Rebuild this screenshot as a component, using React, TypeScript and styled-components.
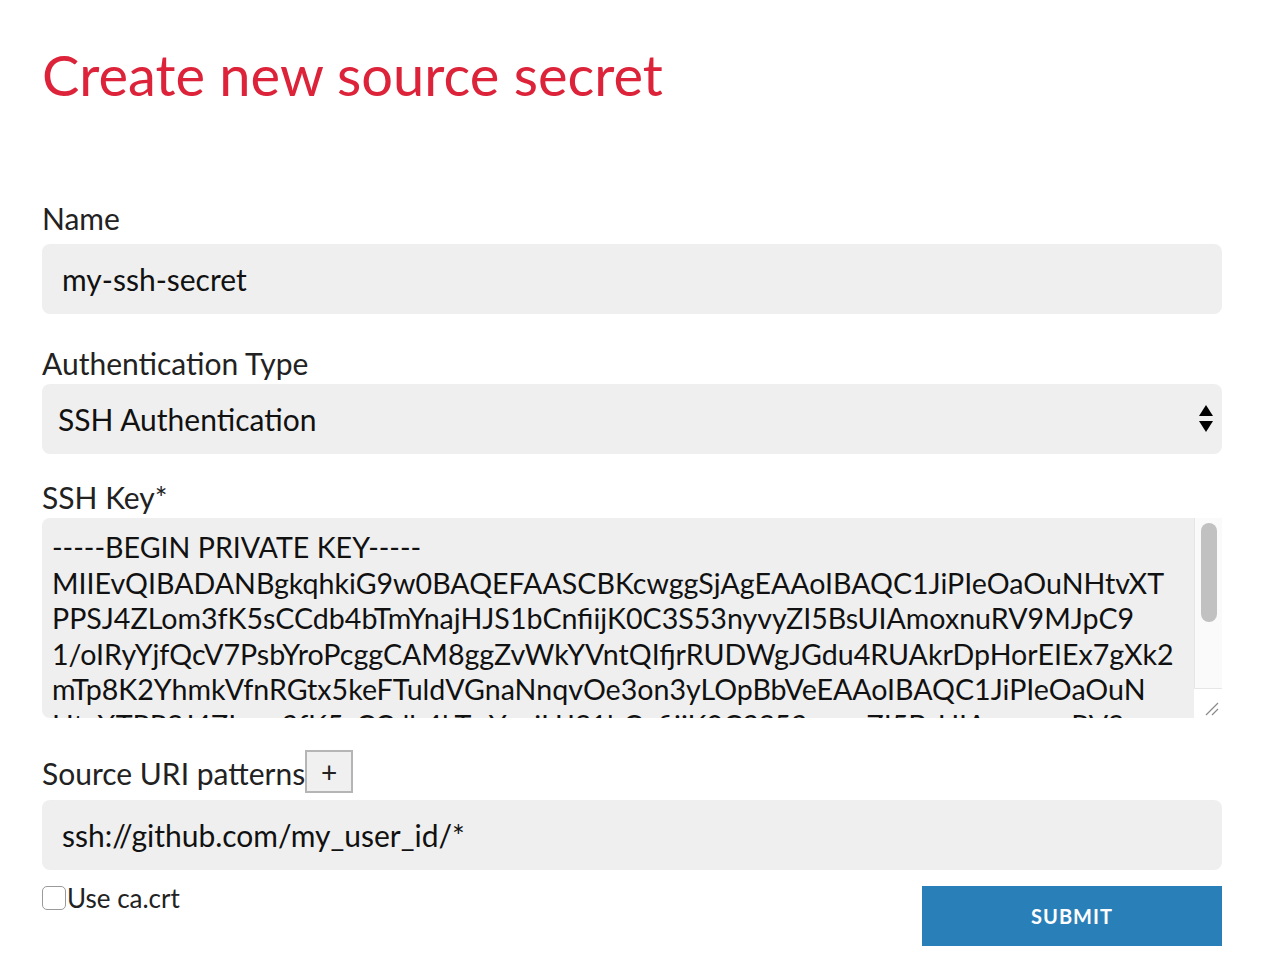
import { useState } from "react";
import styled, { createGlobalStyle } from "styled-components";

const GlobalStyle = createGlobalStyle`
  html, body {
    margin: 0;
    padding: 0;
    background: #ffffff;
  }
  body {
    font-family: Lato, "Noto Sans", sans-serif;
    color: #222222;
  }
`;

const SSH_KEY = [
  "-----BEGIN PRIVATE KEY-----",
  "MIIEvQIBADANBgkqhkiG9w0BAQEFAASCBKcwggSjAgEAAoIBAQC1JiPIeOaOuNHtvXT",
  "PPSJ4ZLom3fK5sCCdb4bTmYnajHJS1bCnfiijK0C3S53nyvyZI5BsUIAmoxnuRV9MJpC9",
  "1/oIRyYjfQcV7PsbYroPcggCAM8ggZvWkYVntQIfjrRUDWgJGdu4RUAkrDpHorEIEx7gXk2",
  "mTp8K2YhmkVfnRGtx5keFTuldVGnaNnqvOe3on3yLOpBbVeEAAoIBAQC1JiPIeOaOuN",
  "HtvXTPPSJ4ZLom3fK5sCCdb4bTmYnajHJS1bCnfiijK0C3S53nyvyZI5BsUIAmoxnuRV9",
  "MJpC91/oIRyYjfQcV7PsbYroPcggCAM8ggZvWkYVntQIfjrRUDWgJGdu4RUAkrDpHorE",
  "-----END PRIVATE KEY-----",
].join("\n");

const App = () => {
  const [name, setName] = useState("my-ssh-secret");
  const [authType, setAuthType] = useState("ssh");
  const [sshKey, setSshKey] = useState(SSH_KEY);
  const [uri, setUri] = useState("ssh://github.com/my_user_id/*");
  const [useCa, setUseCa] = useState(false);

  return (
    <>
      <GlobalStyle />
      <Page>
        <Title>Create new source secret</Title>

        <Form onSubmit={(e) => e.preventDefault()}>
          <Label $top={91} $bottom={9}>
            Name
          </Label>
          <TextInput value={name} onChange={(e) => setName(e.target.value)} />

          <Label $top={32} $bottom={4}>
            Authentication Type
          </Label>
          <SelectWrapper>
            <Select value={authType} onChange={(e) => setAuthType(e.target.value)}>
              <option value="basic">Basic Authentication</option>
              <option value="ssh">SSH Authentication</option>
            </Select>
            <SelectArrows width="14" height="28" viewBox="0 0 14 28">
              <path d="M7 0 L14 11 L0 11 Z" fill="#000" />
              <path d="M0 16 L14 16 L7 27 Z" fill="#000" />
            </SelectArrows>
          </SelectWrapper>

          <Label $top={26} $bottom={4}>
            SSH Key*
          </Label>
          <KeyWrapper>
            <KeyArea value={sshKey} onChange={(e) => setSshKey(e.target.value)} spellCheck={false} />
            <ScrollTrack>
              <ScrollThumb />
            </ScrollTrack>
            <ResizeCorner>
              <svg width="14" height="14" viewBox="0 0 14 14">
                <path d="M1 13 L13 1 M7 13 L13 7" stroke="#8a8a8a" strokeWidth="1.2" fill="none" />
              </svg>
            </ResizeCorner>
          </KeyWrapper>

          <PatternHeader>
            <PatternLabel>Source URI patterns</PatternLabel>
            <AddButton type="button">+</AddButton>
          </PatternHeader>
          <TextInput $top={7} value={uri} onChange={(e) => setUri(e.target.value)} />

          <Footer>
            <CheckLabel>
              <Checkbox type="checkbox" checked={useCa} onChange={(e) => setUseCa(e.target.checked)} />
              Use ca.crt
            </CheckLabel>
            <SubmitButton type="submit">SUBMIT</SubmitButton>
          </Footer>
        </Form>
      </Page>
    </>
  );
};
export default App;

const Page = styled.div`
  padding: 0 44px 28px 42px;
`;

const Title = styled.h1`
  margin: 0;
  padding-top: 40px;
  font-size: 56px;
  line-height: 70px;
  font-weight: 400;
  color: #dc2339;
`;

const Form = styled.form`
  display: flex;
  flex-direction: column;
`;

const Label = styled.label<{ $top?: number; $bottom?: number }>`
  display: block;
  margin-top: ${(p) => p.$top ?? 0}px;
  margin-bottom: ${(p) => p.$bottom ?? 0}px;
  font-size: 30px;
  line-height: 34px;
  color: #222;
`;

const fieldBase = `
  box-sizing: border-box;
  width: 100%;
  border: none;
  outline: none;
  background: #efefef;
  border-radius: 8px;
  font-family: Lato, "Noto Sans", sans-serif;
  font-size: 30px;
  color: #111;
`;

const TextInput = styled.input<{ $top?: number }>`
  ${fieldBase}
  height: 70px;
  margin-top: ${(p) => p.$top ?? 0}px;
  padding: 0 20px;
`;

const SelectWrapper = styled.div`
  position: relative;
`;

const Select = styled.select`
  ${fieldBase}
  appearance: none;
  height: 70px;
  padding: 0 16px;
`;

const SelectArrows = styled.svg`
  position: absolute;
  right: 9px;
  top: 21px;
  pointer-events: none;
`;

const KeyWrapper = styled.div`
  position: relative;
  height: 200px;
`;

const KeyArea = styled.textarea`
  ${fieldBase}
  display: block;
  height: 200px;
  padding: 12px 29px 0 10px;
  font-size: 28.6px;
  line-height: 35.5px;
  border-radius: 8px 0 0 8px;
  resize: none;
  overflow-y: scroll;
  scrollbar-width: none;

  &::-webkit-scrollbar {
    display: none;
  }
`;

const ScrollTrack = styled.div`
  position: absolute;
  top: 0;
  right: 0;
  width: 28px;
  height: 171px;
  box-sizing: border-box;
  background: #fafafa;
  border-left: 1px solid #e6e6e6;
  border-bottom: 1px solid #e6e6e6;
`;

const ScrollThumb = styled.div`
  margin: 5px 0 0 6px;
  width: 16px;
  height: 99px;
  border-radius: 8px;
  background: #c1c1c1;
`;

const ResizeCorner = styled.div`
  position: absolute;
  right: 0;
  bottom: 0;
  width: 28px;
  height: 29px;
  background: #ffffff;
  display: flex;
  align-items: flex-end;
  justify-content: flex-end;
  padding: 0 3px 2px 0;
  box-sizing: border-box;
`;

const PatternHeader = styled.div`
  display: flex;
  align-items: center;
  margin-top: 32px;
  height: 43px;
`;

const PatternLabel = styled.span`
  font-size: 30px;
  line-height: 34px;
  padding-top: 2px;
`;

const AddButton = styled.button`
  box-sizing: border-box;
  width: 48px;
  height: 43px;
  margin-left: 0;
  padding: 0;
  border: 2px solid #b5b5b5;
  background: #f0f0f0;
  font-family: Lato, "Noto Sans", sans-serif;
  font-size: 28px;
  line-height: 1;
  color: #222;
`;

const Footer = styled.div`
  display: flex;
  justify-content: space-between;
  align-items: flex-start;
  margin-top: 16px;
`;

const CheckLabel = styled.label`
  display: flex;
  align-items: center;
  font-size: 26px;
  line-height: 24px;
  color: #222;
`;

const Checkbox = styled.input`
  appearance: none;
  box-sizing: border-box;
  width: 24px;
  height: 24px;
  margin: 0 1px 0 0;
  border: 1px solid #9a9a9a;
  border-radius: 5px;
  background: #fff;
`;

const SubmitButton = styled.button`
  width: 300px;
  height: 60px;
  border: none;
  background: #2980b9;
  color: #fff;
  font-family: Lato, "Noto Sans", sans-serif;
  font-size: 20px;
  font-weight: 700;
  letter-spacing: 1px;
`;
